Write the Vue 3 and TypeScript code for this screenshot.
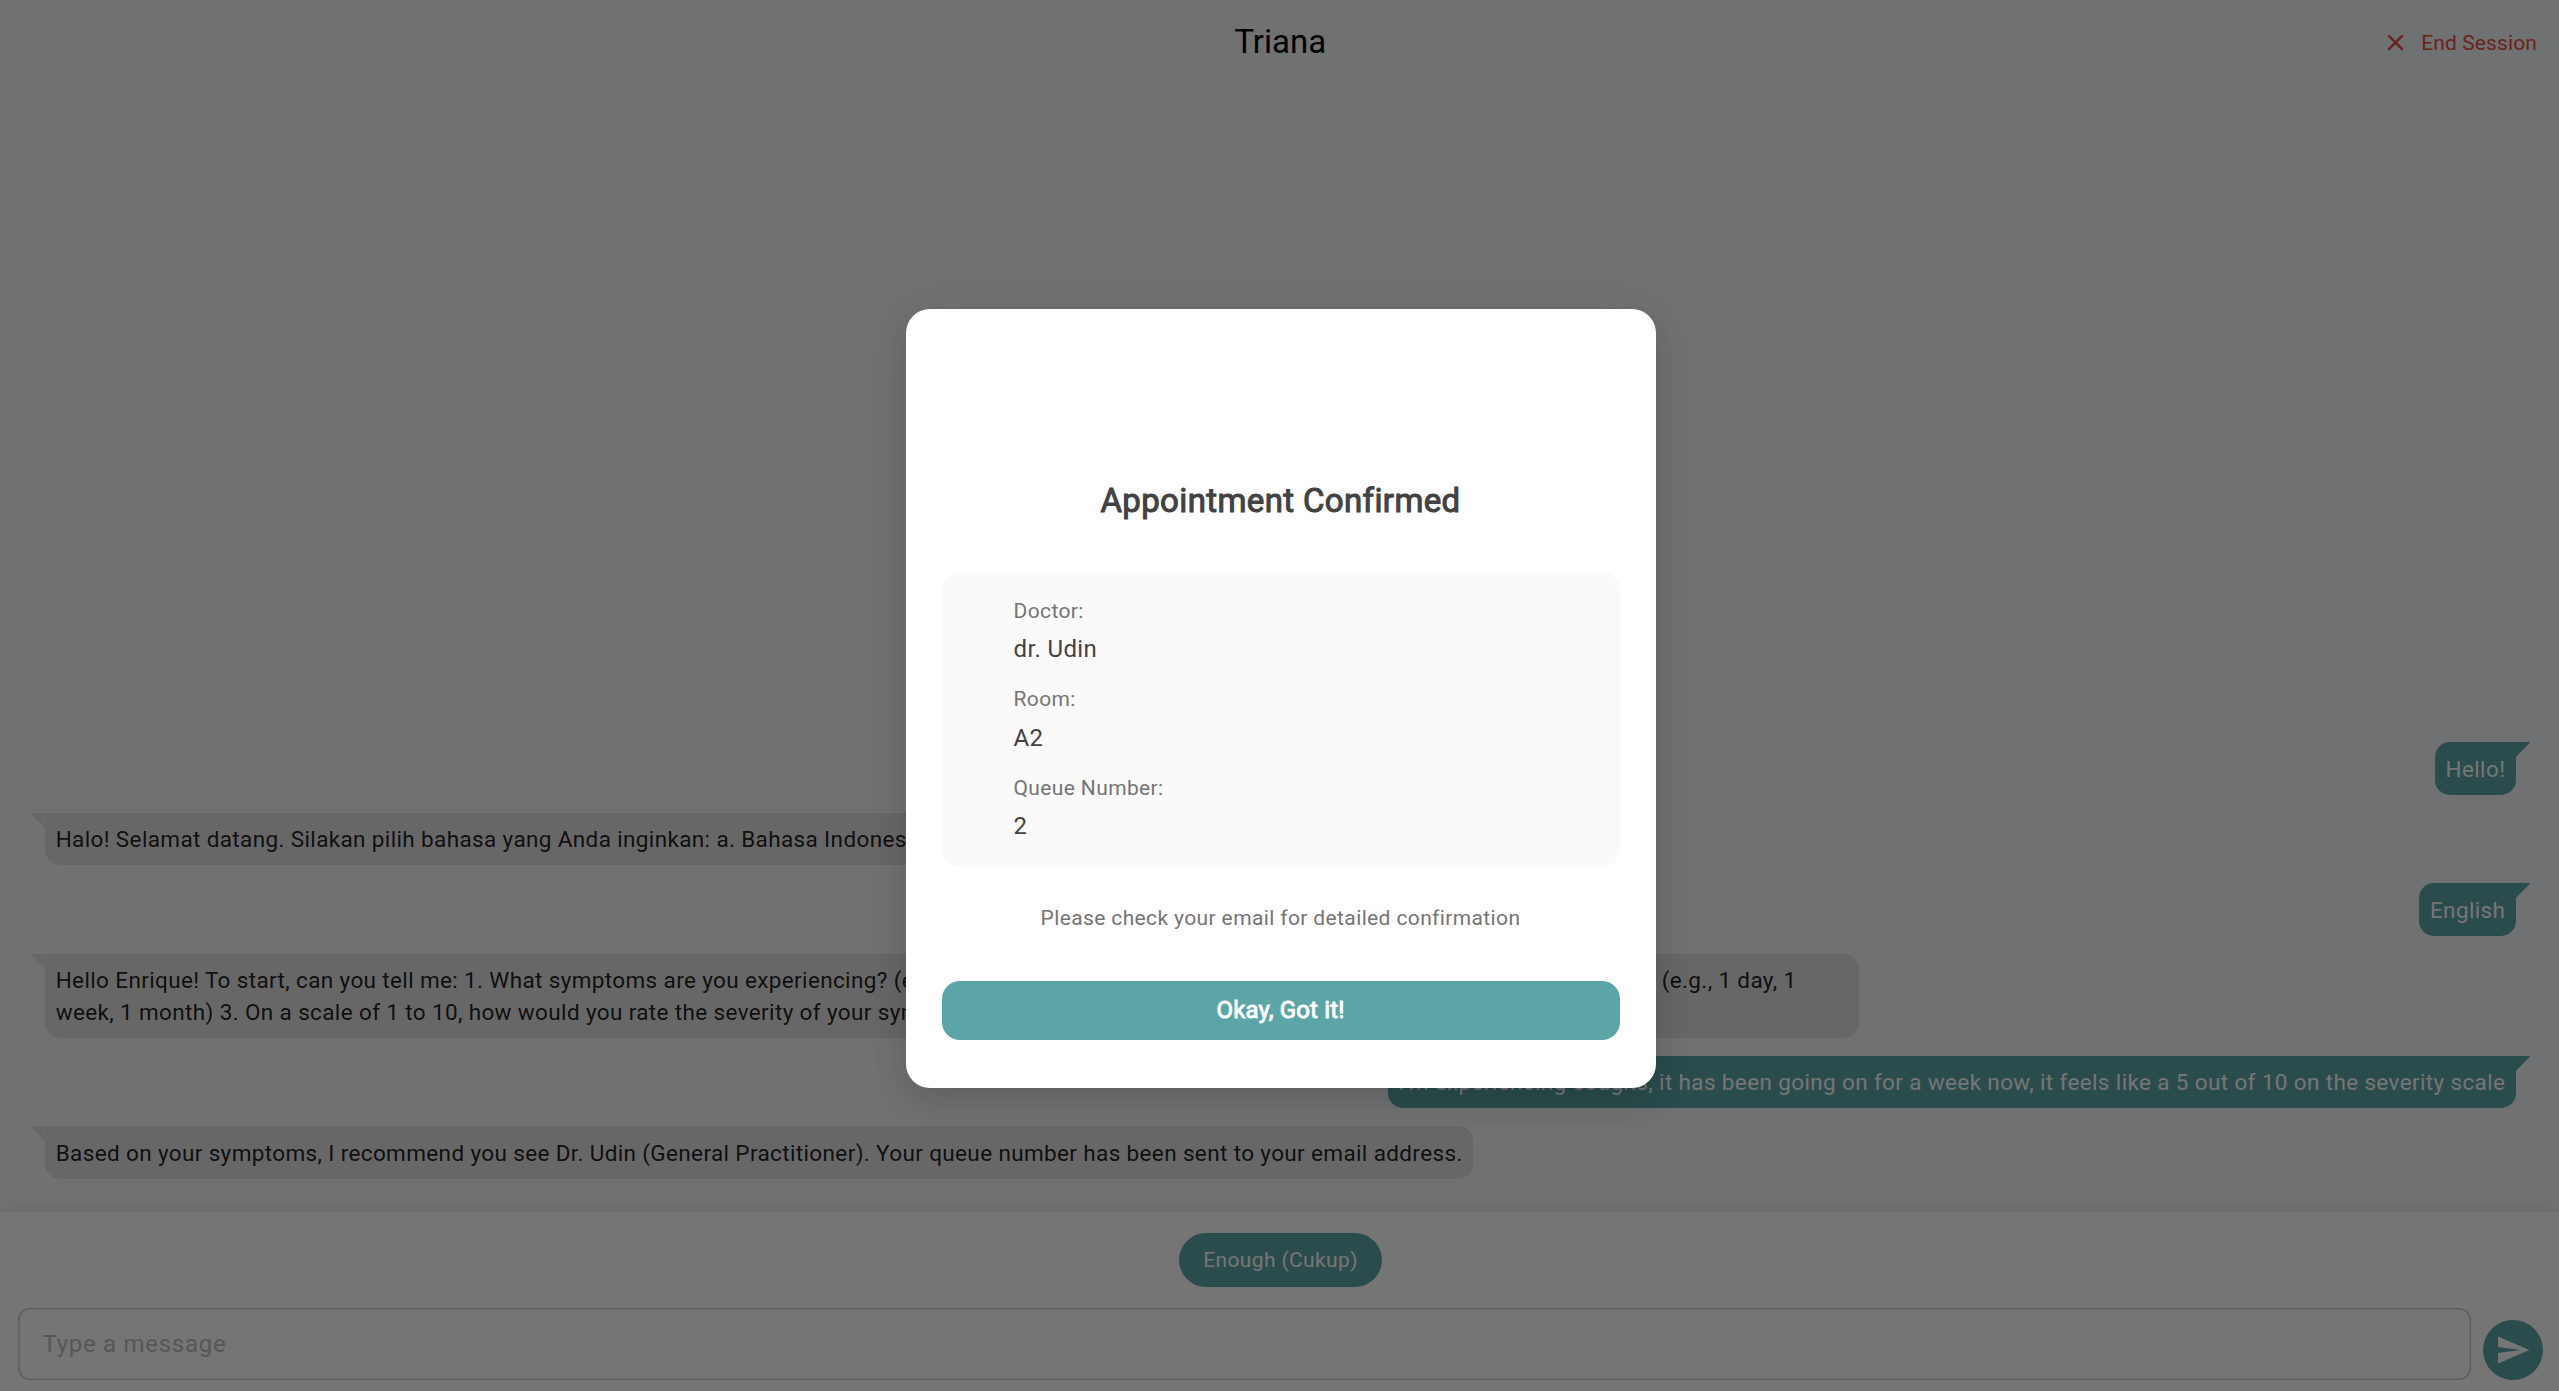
<script setup lang="ts">
interface Message {
  from: 'bot' | 'user'
  text: string
  // second part of a long question list, set on its own column of the first line
  middle?: string
  rest?: string
}

const messages: Message[] = [
  { from: 'user', text: 'Hello!' },
  { from: 'bot', text: 'Halo! Selamat datang. Silakan pilih bahasa yang Anda inginkan: a. Bahasa Indonesia b. English' },
  { from: 'user', text: 'English' },
  {
    from: 'bot',
    text: 'Hello Enrique! To start, can you tell me: 1. What symptoms are you experiencing? ',
    middle: '(e.g., fever, cough) 2. How long have you had these symptoms?',
    rest: '(e.g., 1 day, 1 week, 1 month) 3. On a scale of 1 to 10, how would you rate the severity of your symptoms?',
  },
  { from: 'user', text: "I'm experiencing coughs, it has been going on for a week now, it feels like a 5 out of 10 on the severity scale" },
  { from: 'bot', text: 'Based on your symptoms, I recommend you see Dr. Udin (General Practitioner). Your queue number has been sent to your email address.' },
]

const details = [
  { label: 'Doctor:', value: 'dr. Udin' },
  { label: 'Room:', value: 'A2' },
  { label: 'Queue Number:', value: '2' },
]
</script>

<template>
  <div class="screen">
    <header class="bar">
      <div class="side"></div>
      <h1 class="name">Triana</h1>
      <div class="side end">
        <svg class="close" viewBox="0 0 24 24"><path d="M19 6.41 17.59 5 12 10.59 6.41 5 5 6.41 10.59 12 5 17.59 6.41 19 12 13.41 17.59 19 19 17.59 13.41 12z" /></svg>
        <span>End Session</span>
      </div>
    </header>

    <main class="chat">
      <div v-for="(m, i) in messages" :key="i" class="bubble" :class="m.from">
        <svg class="tail" viewBox="0 0 14 15"><path d="M0 0H13Q14.4 .1 13.4 1.2L0 14.8z" /></svg>
        <template v-if="m.middle">{{ m.text }}<span class="middle">{{ m.middle }}</span>{{ m.rest }}</template>
        <template v-else>{{ m.text }}</template>
      </div>
    </main>

    <footer class="composer">
      <button class="chip">Enough (Cukup)</button>
      <div class="row">
        <div class="input">Type a message</div>
        <button class="send">
          <svg viewBox="0 0 24 24"><path d="M2.01 21 23 12 2.01 3 2 10l15 2-15 2z" /></svg>
        </button>
      </div>
    </footer>

    <div class="scrim">
      <section class="dialog">
        <h2 class="title">Appointment Confirmed</h2>
        <div class="card">
          <div v-for="d in details" :key="d.label" class="detail">
            <div class="label">{{ d.label }}</div>
            <div class="value">{{ d.value }}</div>
          </div>
        </div>
        <p class="hint">Please check your email for detailed confirmation</p>
        <button class="ok">Okay, Got it!</button>
      </section>
    </div>
  </div>
</template>

<style>
body {
  margin: 0;
  overflow: hidden;
}
</style>

<style scoped>
.screen {
  position: relative;
  display: flex;
  flex-direction: column;
  width: 100vw;
  height: 100vh;
  overflow: hidden;
  background: #f5f7fa;
  font-family: Roboto, sans-serif;
  font-weight: 400;
}
.screen * {
  box-sizing: border-box;
}
button {
  border: 0;
  padding: 0;
  font-family: inherit;
  font-weight: 400;
}
.bar {
  display: flex;
  align-items: center;
  height: 84px;
  flex: none;
}
.side {
  flex: 1 1 0;
  display: flex;
  padding: 0 22px;
}
.name {
  margin: 0 0 0 1.6px;
  font-size: 33px;
  line-height: 42px;
  font-weight: 400;
  color: #000;
}
.end {
  align-items: center;
  justify-content: flex-end;
  gap: 12px;
  font-size: 21px;
  line-height: 30px;
  letter-spacing: 0.12px;
  color: #e74c3c;
}
.end span {
  padding-top: 2px;
}
.close {
  width: 27px;
  height: 27px;
  margin-top: 1.5px;
  fill: currentColor;
  stroke: currentColor;
  stroke-width: 0.35;
}
.chat {
  flex: 1 1 0;
  display: flex;
  flex-direction: column;
  justify-content: flex-end;
  gap: 18px;
  padding: 0 43.2px 33.2px 44.7px;
}
.bubble {
  position: relative;
  max-width: 1814px;
  padding: 11.6px 10.5px 9.4px;
  border-radius: 15px;
  font-size: 22.5px;
  line-height: 31.5px;
  letter-spacing: 0.366px;
}
.bot {
  align-self: flex-start;
  padding-left: 11px;
  background: #e0e0e0;
  border-top-left-radius: 0;
  color: rgba(0, 0, 0, 0.87);
}
.user {
  align-self: flex-end;
  background: #5ca5a7;
  border-top-right-radius: 0;
  color: #fff;
}
.tail {
  position: absolute;
  top: 0;
  width: 14px;
  height: 15px;
}
.bot .tail {
  right: 100%;
  width: 15px;
  margin-right: -0.5px;
  transform: scaleX(-1);
  fill: #e0e0e0;
}
.user .tail {
  left: 100%;
  margin-left: -0.3px;
  fill: #5ca5a7;
}
.middle {
  display: inline-block;
  width: 768px;
  white-space: nowrap;
}
.composer {
  flex: none;
  display: flex;
  flex-direction: column;
  align-items: center;
  height: 179px;
  padding: 21px 16px 0 18px;
  background: #fff;
  box-shadow: 0 0 15px rgba(0, 0, 0, 0.1);
}
.chip {
  height: 54px;
  padding: 0 24px;
  border-radius: 27px;
  background: #5ca5a7;
  color: #fff;
  font-size: 21px;
  letter-spacing: 0.375px;
}
.row {
  display: flex;
  align-items: flex-end;
  align-self: stretch;
  gap: 12px;
  margin-top: 21px;
}
.input {
  flex: 1 1 0;
  height: 72px;
  border-radius: 12px;
  box-shadow: inset 0 0 0 1.5px #ccccd4;
  padding-left: 24.5px;
  font-size: 24px;
  line-height: 72px;
  letter-spacing: 0.72px;
  color: #bdbdbd;
}
.send {
  display: flex;
  align-items: center;
  justify-content: center;
  width: 60px;
  height: 60px;
  border-radius: 50%;
  background: #5ca5a7;
}
.send svg {
  width: 36px;
  height: 36px;
  fill: #fff;
}
.scrim {
  position: absolute;
  inset: 0;
  display: flex;
  align-items: center;
  justify-content: center;
  padding: 6.6px 0 0 2px;
  background: rgba(0, 0, 0, 0.54);
}
.dialog {
  display: flex;
  flex-direction: column;
  width: 750px;
  height: 779px;
  padding: 170.4px 36px 0;
  border-radius: 24px;
  background: #fff;
  box-shadow: 0 14px 34px rgba(0, 0, 0, 0.11), 0 4px 48px rgba(0, 0, 0, 0.05);
}
.title {
  margin: 0;
  font-size: 33px;
  line-height: 42px;
  font-weight: 400;
  letter-spacing: 0.375px;
  text-align: center;
  color: #424242;
  -webkit-text-stroke: 1.05px #424242;
}
.card {
  margin-top: 50.1px;
  height: 295.5px;
  padding: 24px 72px 0;
  border-radius: 18px;
  background: #fafafa;
}
.detail {
  height: 88.5px;
}
.label {
  font-size: 21px;
  line-height: 31.5px;
  letter-spacing: 0.375px;
  color: #757575;
}
.value {
  margin-top: 4px;
  font-size: 24px;
  line-height: 36px;
  letter-spacing: 0.375px;
  color: #424242;
}
.hint {
  margin: 35.4px 0 0;
  font-size: 21px;
  line-height: 31.5px;
  letter-spacing: 0.375px;
  text-align: center;
  color: #757575;
}
.ok {
  height: 59.2px;
  margin-top: 46.6px;
  border-radius: 18px;
  background: #5ca5a7;
  color: #fff;
  font-size: 24px;
  letter-spacing: 0.15px;
  -webkit-text-stroke: 0.9px #fff;
}
</style>
